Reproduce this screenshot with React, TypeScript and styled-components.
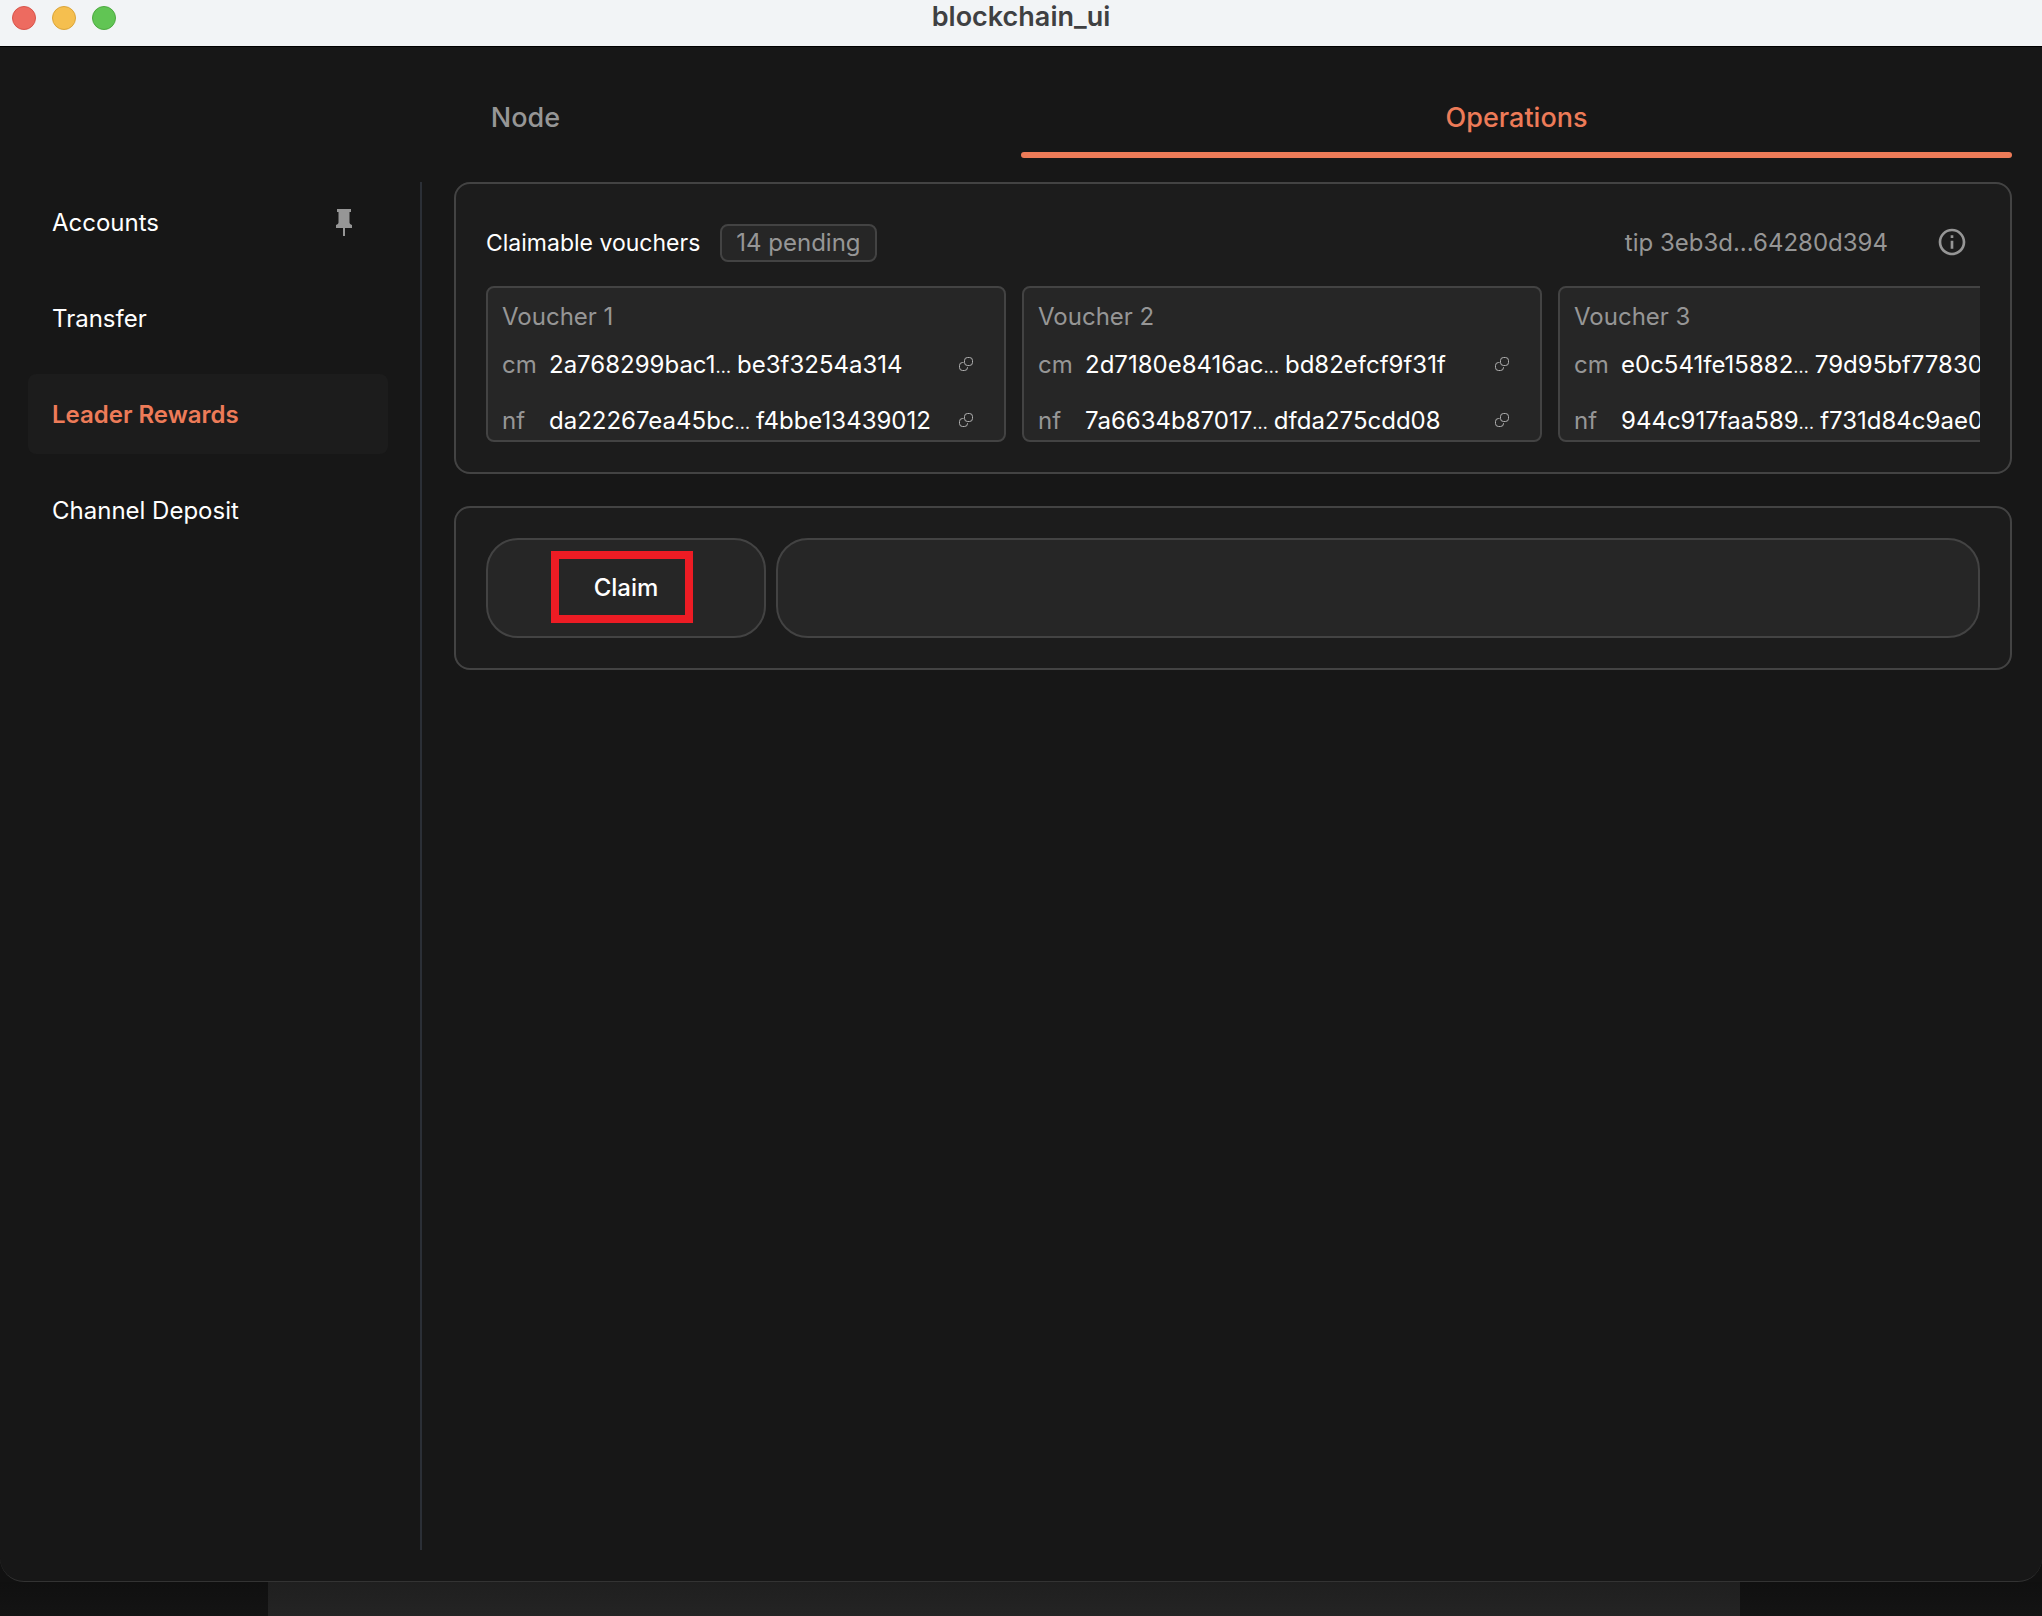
import React from "react";
import styled, { createGlobalStyle, css } from "styled-components";

const color = {
  bg: "#171717",
  panel: "#1c1c1c",
  card: "#262626",
  border: "#434343",
  divider: "#2b2f36",
  text: "#ffffff",
  muted: "#969696",
  accent: "#ed7b58",
};

const GlobalStyle = createGlobalStyle`
  *, *::before, *::after { box-sizing: border-box; }
  body {
    margin: 0;
    background: #111111;
    color: ${color.text};
    font-family: Inter, "Liberation Sans", sans-serif;
    font-size: 24px;
    line-height: 32px;
  }
  button, input { font: inherit; color: inherit; }
`;

const Desktop = styled.div`
  display: grid;
  grid-template-rows: 1fr 34px;
  min-height: 100vh;
`;

const Backdrop = styled.div`
  display: grid;
  grid-template-columns: 268px 1fr 302px;
  background: linear-gradient(#101010, #141414);
`;

const BackWindow = styled.div`
  grid-column: 2;
  background: linear-gradient(#1f1f1f, #242424);
`;

const Window = styled.div`
  display: flex;
  flex-direction: column;
  overflow: hidden;
  background: ${color.bg};
  border-bottom: 1px solid #333333;
  border-radius: 0 0 24px 24px;
`;

const TitleBar = styled.header`
  display: grid;
  grid-template-columns: 1fr auto 1fr;
  align-items: start;
  height: 47px;
  padding: 0 12px;
  background: #f2f4f6;
  border-bottom: 1px solid #000000;
`;

const WindowButtons = styled.div`
  display: flex;
  gap: 16px;
  padding-top: 6px;
`;

const WindowButton = styled.button<{ $fill: string; $edge: string }>`
  width: 24px;
  height: 24px;
  padding: 0;
  background: ${(p) => p.$fill};
  border: 1px solid ${(p) => p.$edge};
  border-radius: 50%;
`;

const WindowTitle = styled.h1`
  margin: 0;
  color: #3f4042;
  font-size: 27px;
  font-weight: 600;
  line-height: 34px;
`;

const Tabs = styled.div`
  display: grid;
  grid-template-columns: 1fr 1fr;
  padding: 31px 30px 24px;
`;

const Tab = styled.button<{ $active?: boolean }>`
  height: 80px;
  padding: 0;
  position: relative;
  background: none;
  border: 0;
  color: ${(p) => (p.$active ? color.accent : color.muted)};
  font-size: 27px;
  font-weight: 500;

  ${(p) =>
    p.$active &&
    css`
      &::after {
        content: "";
        position: absolute;
        inset: auto 0 0;
        height: 6px;
        background: ${color.accent};
        border-radius: 3px;
      }
    `}
`;

const Body = styled.div`
  display: flex;
  flex: 1;
  padding: 0 30px 31px 28px;
`;

const SideNav = styled.nav`
  display: flex;
  flex: 0 0 360px;
  flex-direction: column;
  gap: 16px;
  margin-right: 32px;
`;

const NavItem = styled.div<{ $active?: boolean }>`
  display: flex;
  align-items: center;
  justify-content: space-between;
  height: 80px;
  padding: 0 36px 0 24px;
  background: ${(p) => (p.$active ? color.panel : "transparent")};
  border-radius: 8px;
`;

const NavLink = styled.a<{ $active?: boolean }>`
  padding-top: 2px;
  color: ${(p) => (p.$active ? color.accent : color.text)};
  font-weight: ${(p) => (p.$active ? 600 : 400)};
  text-decoration: none;
`;

const IconButton = styled.button<{ $width?: number }>`
  display: flex;
  align-items: center;
  justify-content: center;
  flex: none;
  width: ${(p) => p.$width ?? 16}px;
  height: 56px;
  padding: 0;
  background: none;
  border: 0;
  color: ${color.muted};

  svg { display: block; }
`;

const Content = styled.main`
  display: flex;
  flex: 1;
  flex-direction: column;
  gap: 32px;
  min-width: 0;
  padding-left: 32px;
  border-left: 2px solid ${color.divider};
`;

const Panel = styled.section`
  padding: 30px;
  background: ${color.panel};
  border: 2px solid ${color.border};
  border-radius: 16px;
`;

const PanelHeader = styled.div`
  display: flex;
  align-items: center;
  height: 56px;
  margin-bottom: 16px;
`;

const PanelTitle = styled.h2`
  margin: 2px 20px 0 0;
  font-size: 23px;
  font-weight: 400;
`;

const Badge = styled.span`
  margin-top: 2px;
  padding: 1px 14px;
  background: ${color.card};
  border: 2px solid ${color.border};
  border-radius: 8px;
  color: ${color.muted};
`;

const Tip = styled.span`
  margin: 2px 36px 0 auto;
  color: ${color.muted};
`;

const VoucherStrip = styled.ul`
  display: flex;
  gap: 16px;
  margin: 0;
  padding: 0;
  overflow-x: auto;
  list-style: none;
  scrollbar-width: none;
`;

const VoucherCard = styled.li`
  flex: 0 0 520px;
  height: 156px;
  padding: 13px 14px;
  overflow: hidden;
  background: ${color.card};
  border: 2px solid ${color.border};
  border-radius: 8px;
`;

const VoucherName = styled.h3`
  margin: 0 0 3px;
  color: ${color.muted};
  font-size: 24px;
  font-weight: 400;
`;

const HashRow = styled.div`
  display: flex;
  align-items: center;
  height: 56px;
`;

const HashLabel = styled.span`
  flex: 0 0 47px;
  padding-top: 2px;
  color: ${color.muted};
`;

const Hash = styled.span`
  flex: 1;
  padding-top: 2px;
  white-space: nowrap;
`;

const Ellipsis = styled.span`
  margin-right: 6px;
  font-size: 18px;
  line-height: 16px;
`;

const ClaimRow = styled.div`
  display: flex;
  gap: 10px;
`;

const ClaimButton = styled.button`
  position: relative;
  flex: 0 0 280px;
  height: 100px;
  background: ${color.card};
  border: 2px solid ${color.border};
  border-radius: 32px;
  font-weight: 500;
`;

const Highlight = styled.span`
  position: absolute;
  top: 11px;
  left: 63px;
  width: 142px;
  height: 72px;
  border: 8px solid #ed1c24;
`;

const ResultField = styled.input`
  flex: 1;
  min-width: 0;
  height: 100px;
  padding: 0 32px;
  background: ${color.card};
  border: 2px solid ${color.border};
  border-radius: 32px;
  outline: 0;
`;

const PinIcon = () => (
  <svg width="16" height="27" viewBox="0 0 16 27" fill="currentColor" aria-hidden="true">
    <path d="M1 0h14v3h-1.5v10.5c0 1.200 1 2 2.500 2.500v3H9v8H7v-8H0v-3c1.500-.5 2.500-1.300 2.500-2.500V3H1z" />
  </svg>
);

const InfoIcon = () => (
  <svg width="32" height="32" viewBox="0 0 24 24" fill="currentColor" aria-hidden="true">
    <path d="M11 7h2v2h-2zm0 4h2v6h-2zm1-9C6.480 2 2 6.480 2 12s4.480 10 10 10 10-4.480 10-10S17.520 2 12 2zm0 18c-4.410 0-8-3.590-8-8s3.590-8 8-8 8 3.590 8 8-3.590 8-8 8z" />
  </svg>
);

const CopyIcon = () => (
  <svg width="14" height="14" viewBox="0 0 14 14" fill="none" stroke="#b0b0b0" aria-hidden="true">
    <rect x="5.500" y=".5" width="8" height="8" rx="3" />
    <path d="M4.500 5.500h-1a3 3 0 0 0-3 3v2a3 3 0 0 0 3 3h2a3 3 0 0 0 3-3v-.5" />
  </svg>
);

type HashParts = [string, string];

const vouchers: { cm: HashParts; nf: HashParts }[] = [
  { cm: ["2a768299bac1", "be3f3254a314"], nf: ["da22267ea45bc", "f4bbe13439012"] },
  { cm: ["2d7180e8416ac", "bd82efcf9f31f"], nf: ["7a6634b87017", "dfda275cdd08"] },
  { cm: ["e0c541fe15882", "79d95bf77830"], nf: ["944c917faa589", "f731d84c9ae0"] },
];

const navItems = ["Accounts", "Transfer", "Leader Rewards", "Channel Deposit"];

const HashLine = ({ label, parts }: { label: string; parts: HashParts }) => (
  <HashRow>
    <HashLabel>{label}</HashLabel>
    <Hash>
      {parts[0]}
      <Ellipsis>…</Ellipsis>
      {parts[1]}
    </Hash>
    <IconButton $width={48} aria-label={`Copy ${label}`}>
      <CopyIcon />
    </IconButton>
  </HashRow>
);

export default function App() {
  return (
    <>
      <GlobalStyle />
      <Desktop>
        <Window>
          <TitleBar>
            <WindowButtons>
              <WindowButton $fill="#ed6b60" $edge="#d8554b" aria-label="Close" />
              <WindowButton $fill="#f5bf4f" $edge="#dba53a" aria-label="Minimize" />
              <WindowButton $fill="#61c554" $edge="#4eaa41" aria-label="Zoom" />
            </WindowButtons>
            <WindowTitle>blockchain_ui</WindowTitle>
          </TitleBar>
          <Tabs role="tablist">
            <Tab role="tab" aria-selected={false}>Node</Tab>
            <Tab role="tab" aria-selected $active>Operations</Tab>
          </Tabs>
          <Body>
            <SideNav>
              {navItems.map((item) => {
                const active = item === "Leader Rewards";
                return (
                  <NavItem key={item} $active={active}>
                    <NavLink href="#" $active={active}>{item}</NavLink>
                    {item === "Accounts" && (
                      <IconButton aria-label="Pin sidebar">
                        <PinIcon />
                      </IconButton>
                    )}
                  </NavItem>
                );
              })}
            </SideNav>
            <Content>
              <Panel>
                <PanelHeader>
                  <PanelTitle>Claimable vouchers</PanelTitle>
                  <Badge>14 pending</Badge>
                  <Tip>tip 3eb3d...64280d394</Tip>
                  <IconButton $width={56} aria-label="Information">
                    <InfoIcon />
                  </IconButton>
                </PanelHeader>
                <VoucherStrip>
                  {vouchers.map((voucher, index) => (
                    <VoucherCard key={voucher.cm[0]}>
                      <VoucherName>Voucher {index + 1}</VoucherName>
                      <HashLine label="cm" parts={voucher.cm} />
                      <HashLine label="nf" parts={voucher.nf} />
                    </VoucherCard>
                  ))}
                </VoucherStrip>
              </Panel>
              <Panel>
                <ClaimRow>
                  <ClaimButton>
                    Claim
                    <Highlight />
                  </ClaimButton>
                  <ResultField readOnly aria-label="Claim result" />
                </ClaimRow>
              </Panel>
            </Content>
          </Body>
        </Window>
        <Backdrop>
          <BackWindow />
        </Backdrop>
      </Desktop>
    </>
  );
}
